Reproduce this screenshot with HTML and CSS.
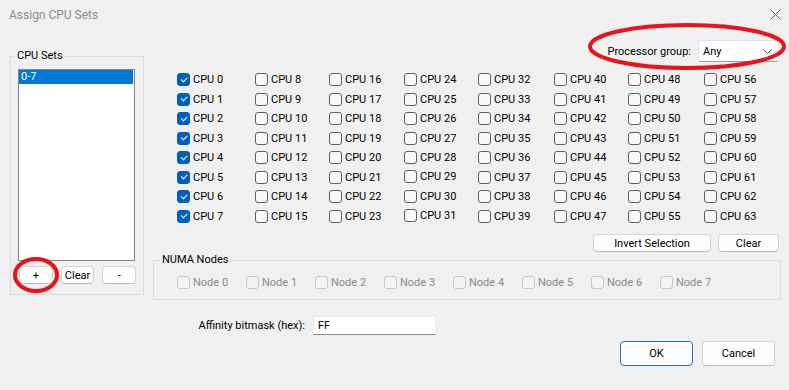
FILE: index.html
```html
<!DOCTYPE html>
<html lang="en">
<head>
  <meta charset="UTF-8">
  <title>Assign CPU Sets</title>
  <link rel="stylesheet" href="styles.css">
</head>
<body>

<div class="dialog">
  <header class="titlebar">
    <span class="title">Assign CPU Sets</span>
    <svg class="close" width="11" height="11" viewBox="0 0 11 11">
      <path d="M0.5 0.5L10.5 10.5M10.5 0.5L0.5 10.5" stroke="#606060" stroke-width="1" fill="none"/>
    </svg>
  </header>

  <div class="content">
    <fieldset class="group sets">
      <legend>CPU Sets</legend>
      <div class="listbox">
        <div class="item selected">0-7</div>
      </div>
      <div class="set-buttons">
        <button class="btn">+</button>
        <button class="btn">Clear</button>
        <button class="btn">-</button>
      </div>
    </fieldset>

    <div class="main">
      <div class="group-row">
        <span>Processor group:</span>
        <div class="combo">
          <span>Any</span>
          <svg width="9" height="5" viewBox="0 0 9 5"><path d="M0.5 0.5L4.5 4.5L8.5 0.5" stroke="#555" fill="none"/></svg>
        </div>
      </div>

      <div class="cpu-grid">
        <label class="cb on"><span class="box"></span>CPU 0</label>
        <label class="cb on"><span class="box"></span>CPU 1</label>
        <label class="cb on"><span class="box"></span>CPU 2</label>
        <label class="cb on"><span class="box"></span>CPU 3</label>
        <label class="cb on"><span class="box"></span>CPU 4</label>
        <label class="cb on"><span class="box"></span>CPU 5</label>
        <label class="cb on"><span class="box"></span>CPU 6</label>
        <label class="cb on"><span class="box"></span>CPU 7</label>
        <label class="cb"><span class="box"></span>CPU 8</label>
        <label class="cb"><span class="box"></span>CPU 9</label>
        <label class="cb"><span class="box"></span>CPU 10</label>
        <label class="cb"><span class="box"></span>CPU 11</label>
        <label class="cb"><span class="box"></span>CPU 12</label>
        <label class="cb"><span class="box"></span>CPU 13</label>
        <label class="cb"><span class="box"></span>CPU 14</label>
        <label class="cb"><span class="box"></span>CPU 15</label>
        <label class="cb"><span class="box"></span>CPU 16</label>
        <label class="cb"><span class="box"></span>CPU 17</label>
        <label class="cb"><span class="box"></span>CPU 18</label>
        <label class="cb"><span class="box"></span>CPU 19</label>
        <label class="cb"><span class="box"></span>CPU 20</label>
        <label class="cb"><span class="box"></span>CPU 21</label>
        <label class="cb"><span class="box"></span>CPU 22</label>
        <label class="cb"><span class="box"></span>CPU 23</label>
        <label class="cb"><span class="box"></span>CPU 24</label>
        <label class="cb"><span class="box"></span>CPU 25</label>
        <label class="cb"><span class="box"></span>CPU 26</label>
        <label class="cb"><span class="box"></span>CPU 27</label>
        <label class="cb"><span class="box"></span>CPU 28</label>
        <label class="cb raised"><span class="box"></span>CPU 29</label>
        <label class="cb"><span class="box"></span>CPU 30</label>
        <label class="cb raised"><span class="box"></span>CPU 31</label>
        <label class="cb"><span class="box"></span>CPU 32</label>
        <label class="cb"><span class="box"></span>CPU 33</label>
        <label class="cb"><span class="box"></span>CPU 34</label>
        <label class="cb"><span class="box"></span>CPU 35</label>
        <label class="cb"><span class="box"></span>CPU 36</label>
        <label class="cb"><span class="box"></span>CPU 37</label>
        <label class="cb"><span class="box"></span>CPU 38</label>
        <label class="cb"><span class="box"></span>CPU 39</label>
        <label class="cb"><span class="box"></span>CPU 40</label>
        <label class="cb"><span class="box"></span>CPU 41</label>
        <label class="cb"><span class="box"></span>CPU 42</label>
        <label class="cb"><span class="box"></span>CPU 43</label>
        <label class="cb"><span class="box"></span>CPU 44</label>
        <label class="cb"><span class="box"></span>CPU 45</label>
        <label class="cb"><span class="box"></span>CPU 46</label>
        <label class="cb"><span class="box"></span>CPU 47</label>
        <label class="cb"><span class="box"></span>CPU 48</label>
        <label class="cb"><span class="box"></span>CPU 49</label>
        <label class="cb"><span class="box"></span>CPU 50</label>
        <label class="cb"><span class="box"></span>CPU 51</label>
        <label class="cb"><span class="box"></span>CPU 52</label>
        <label class="cb"><span class="box"></span>CPU 53</label>
        <label class="cb"><span class="box"></span>CPU 54</label>
        <label class="cb"><span class="box"></span>CPU 55</label>
        <label class="cb"><span class="box"></span>CPU 56</label>
        <label class="cb"><span class="box"></span>CPU 57</label>
        <label class="cb"><span class="box"></span>CPU 58</label>
        <label class="cb"><span class="box"></span>CPU 59</label>
        <label class="cb"><span class="box"></span>CPU 60</label>
        <label class="cb"><span class="box"></span>CPU 61</label>
        <label class="cb"><span class="box"></span>CPU 62</label>
        <label class="cb"><span class="box"></span>CPU 63</label>
      </div>

      <div class="grid-actions">
        <button class="btn invert">Invert Selection</button>
        <button class="btn clear">Clear</button>
      </div>

      <fieldset class="group numa">
        <legend>NUMA Nodes</legend>
        <div class="nodes">
          <label class="cb off"><span class="box"></span>Node 0</label>
          <label class="cb off"><span class="box"></span>Node 1</label>
          <label class="cb off"><span class="box"></span>Node 2</label>
          <label class="cb off"><span class="box"></span>Node 3</label>
          <label class="cb off"><span class="box"></span>Node 4</label>
          <label class="cb off"><span class="box"></span>Node 5</label>
          <label class="cb off"><span class="box"></span>Node 6</label>
          <label class="cb off"><span class="box"></span>Node 7</label>
        </div>
      </fieldset>

      <div class="mask-row">
        <label for="mask">Affinity bitmask (hex):</label>
        <input id="mask" type="text" value="FF">
      </div>

      <div class="dialog-buttons">
        <button class="btn wide default">OK</button>
        <button class="btn wide">Cancel</button>
      </div>
    </div>
  </div>

  <!-- red annotation marks drawn over the dialog -->
  <svg class="marks" width="789" height="390" viewBox="0 0 789 390">
    <ellipse cx="36" cy="275" rx="21" ry="16" fill="none" stroke="#e8131b" stroke-width="4"/>
    <ellipse cx="687" cy="46.5" rx="97" ry="21.5" fill="none" stroke="#e8131b" stroke-width="4"/>
  </svg>
</div>

</body>
</html>
```

FILE: styles.css
```css
body {
  margin: 0;
  background-color: #f0f0f0;
  font-family: Roboto, "Liberation Sans", sans-serif;
  font-size: 11px;
  color: #000;
}
.dialog {
  position: relative;
  width: 789px;
  height: 390px;
  background-color: #f0f0f0;
  overflow: hidden;
}
.titlebar {
  height: 30px;
  display: flex;
  align-items: center;
  justify-content: space-between;
  padding: 0 8px 0 9px;
}
.title {
  font-size: 12px;
  color: #8c8c8c;
}
.close {
  margin-top: -1px;
}
.content {
  display: flex;
  align-items: flex-start;
  padding-left: 10px;
}
.group {
  margin: 0;
  min-width: 0;
  border: 1px solid #dcdcdc;
  border-radius: 0;
}
.group legend {
  padding: 0 2px;
  line-height: 14px;
  font-size: 11px;
}
.sets {
  width: 134px;
  box-sizing: border-box;
  margin-top: 19px;
  padding: 6px 7px 10px 7px;
}
.sets legend {
  margin-left: -3px;
}
.listbox {
  width: 117px;
  height: 192px;
  box-sizing: border-box;
  border: 1px solid #868686;
  background-color: #fff;
  padding: 0 1px 0 0;
}
.item {
  height: 14px;
  line-height: 14px;
  padding-left: 2px;
}
.item.selected {
  background-color: #0078d7;
  color: #fff;
}
.set-buttons {
  display: flex;
  gap: 8px;
  margin-top: 5px;
  padding-left: 1px;
}
.btn {
  height: 18px;
  padding: 0;
  font-family: inherit;
  font-size: 11px;
  color: #000;
  background-color: #fdfdfd;
  border: 1px solid #d3d3d3;
  border-bottom-color: #bdbdbd;
  border-radius: 4px;
}
.set-buttons .btn {
  width: 34px;
}
.main {
  width: 628px;
  margin-left: 9px;
  display: flex;
  flex-direction: column;
}
.group-row {
  height: 22px;
  margin-top: 10px;
  display: flex;
  align-items: center;
  justify-content: flex-end;
  gap: 7px;
  padding-right: 2px;
}
.combo {
  width: 81px;
  height: 22px;
  box-sizing: border-box;
  display: flex;
  align-items: center;
  justify-content: space-between;
  padding: 0 6px 0 4px;
  background-color: #fff;
  border: 1px solid #e3e3e3;
  border-bottom-color: #9a9a9a;
  border-radius: 3px;
}
.cpu-grid {
  display: grid;
  grid-template-rows: repeat(8, 19.5px);
  grid-template-columns: 78px 74px 75px 74px 76px 74px 76px 1fr;
  grid-auto-flow: column;
  padding-left: 24px;
  margin-top: 8px;
}
.cb {
  display: flex;
  align-items: center;
  gap: 3px;
  white-space: nowrap;
}
.cb.raised {
  align-items: flex-start;
  padding-top: 2px;
}
.box {
  position: relative;
  flex: none;
  width: 13px;
  height: 13px;
  box-sizing: border-box;
  border: 1px solid #5f5f5f;
  border-radius: 3px;
  background-color: #f8f8f8;
}
.cb.on .box {
  background-color: #005fb8;
  border-color: #005fb8;
}
.cb.on .box::after {
  content: "";
  position: absolute;
  left: 2.5px;
  top: 2.5px;
  width: 5px;
  height: 2.5px;
  border-left: 1.2px solid #fff;
  border-bottom: 1.2px solid #fff;
  transform: rotate(-45deg);
}
.cb.off {
  color: #8a8a8a;
}
.cb.off .box {
  border-color: #c8c8c8;
  background-color: #f4f4f4;
}
.grid-actions {
  display: flex;
  justify-content: flex-end;
  gap: 7px;
  margin-top: 8px;
  padding-right: 2px;
}
.btn.invert {
  width: 118px;
}
.btn.clear {
  width: 61px;
}
.numa {
  width: 628px;
  box-sizing: border-box;
  margin-top: 1px;
  padding: 8px 0 10px 0;
}
.numa legend {
  margin-left: 6px;
}
.nodes {
  display: flex;
  padding-left: 23px;
}
.nodes .cb {
  width: 69px;
  height: 14px;
}
.mask-row {
  display: flex;
  align-items: center;
  margin-top: 16px;
}
.mask-row label {
  width: 152px;
  text-align: right;
  margin-right: 8px;
}
.mask-row input {
  width: 123px;
  height: 19px;
  box-sizing: border-box;
  padding: 0 4px;
  font-family: inherit;
  font-size: 11px;
  color: #000;
  background-color: #fff;
  border: 1px solid #ececec;
  border-bottom-color: #8a8a8a;
  outline: none;
}
.dialog-buttons {
  display: flex;
  justify-content: flex-end;
  gap: 9px;
  margin-top: 6px;
  padding-right: 6px;
}
.btn.wide {
  width: 73px;
  height: 25px;
}
.btn.default {
  border-color: #1f6fc0;
}
.marks {
  position: absolute;
  left: 0;
  top: 0;
  pointer-events: none;
}
```
